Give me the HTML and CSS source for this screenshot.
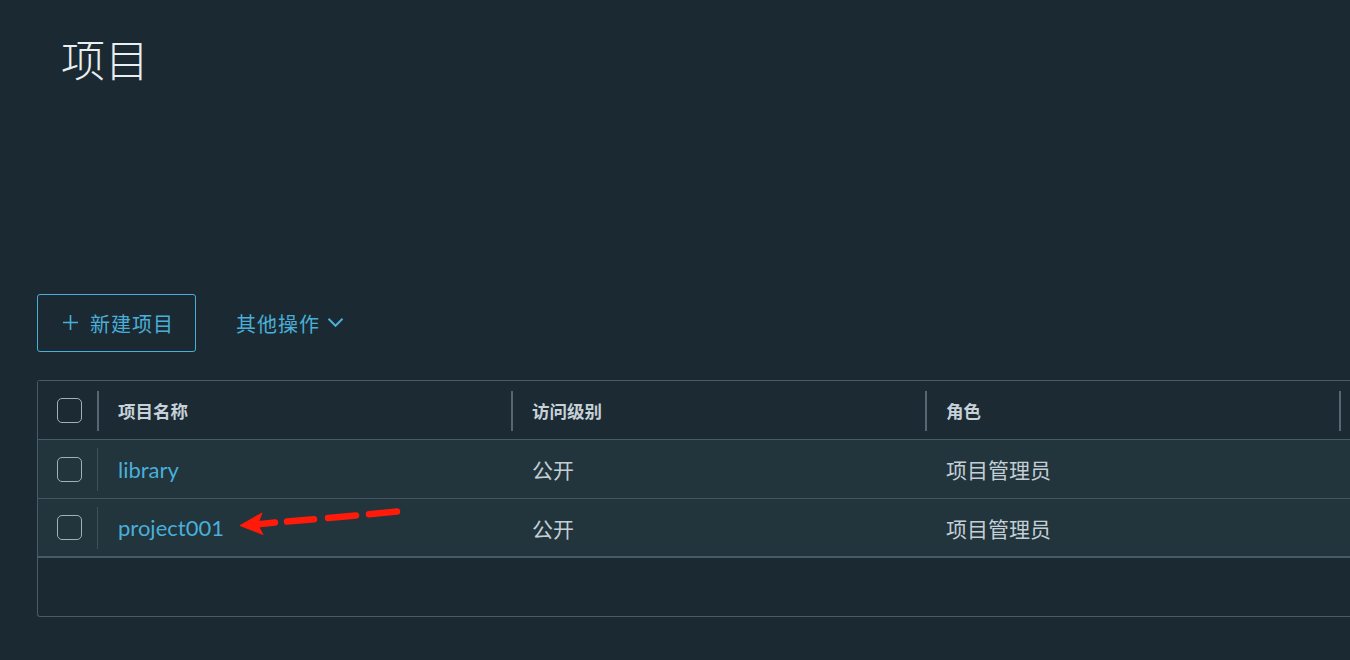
FILE: index.html
```html
<!DOCTYPE html>
<html lang="zh-CN">
<head>
<meta charset="utf-8">
<title>项目</title>
<link rel="stylesheet" href="styles.css">
</head>
<body>
<main class="page">
  <h1 class="title">项目</h1>
  <div class="toolbar">
    <button class="btn-outline" type="button">
      <svg class="plus" width="17" height="17" viewBox="0 0 17 17"><path d="M8.5 1v15M1 8.5h15" stroke="currentColor" stroke-width="1.6" fill="none"/></svg>
      <span>新建项目</span>
    </button>
    <button class="btn-link" type="button">
      <span>其他操作</span>
      <svg class="chev" width="17" height="11" viewBox="0 0 17 11"><path d="M1.5 1.8l7 7 7-7" stroke="currentColor" stroke-width="2" fill="none"/></svg>
    </button>
  </div>
  <div class="grid">
    <div class="row head">
      <div class="cell sel"><span class="cb"></span><span class="sep"></span></div>
      <div class="cell col">项目名称<span class="sep"></span></div>
      <div class="cell col">访问级别<span class="sep"></span></div>
      <div class="cell col">角色<span class="sep"></span></div>
      <div class="cell rest"></div>
    </div>
    <div class="row body">
      <div class="cell sel"><span class="cb"></span><span class="sep light"></span></div>
      <div class="cell col"><a class="link" href="#">library</a></div>
      <div class="cell col">公开</div>
      <div class="cell col">项目管理员</div>
      <div class="cell rest"></div>
    </div>
    <div class="row body last">
      <div class="cell sel"><span class="cb"></span><span class="sep light"></span></div>
      <div class="cell col"><a class="link" href="#">project001</a></div>
      <div class="cell col">公开</div>
      <div class="cell col">项目管理员</div>
      <div class="cell rest"></div>
    </div>
    <div class="footer"></div>
    <svg class="arrow" width="170" height="32" viewBox="0 0 170 32">
      <g stroke="#ff1a0a" stroke-width="6.5" stroke-linecap="round" fill="none">
        <path d="M18 18.4 L37 16.6"/>
        <path d="M49 15.6 L76 13.2"/>
        <path d="M90 11.9 L118 9.4"/>
        <path d="M131 8.2 L159 5.6"/>
      </g>
      <path d="M2 19.5 L24 7 L19.5 18.5 L25 28.5 Z" fill="#ff1a0a" stroke="#ff1a0a" stroke-width="1" stroke-linejoin="round"/>
    </svg>
  </div>
</main>
</body>
</html>
```
FILE: styles.css
```css
html, body {
  margin: 0;
  padding: 0;
  background: #1b2a32;
  overflow: hidden;
}
body {
  width: 1350px;
  height: 660px;
  font-family: "Lato", "Noto Sans CJK SC", sans-serif;
  color: #c4cfd6;
}
.page {
  padding: 31px 0 0 37px;
}
.title {
  margin: 0 0 0 24px;
  font-family: "Noto Sans CJK SC", sans-serif;
  font-weight: 300;
  font-size: 44px;
  line-height: 54px;
  color: #e9eef1;
}
.toolbar {
  display: flex;
  align-items: center;
  margin-top: 209px;
  height: 58px;
}
.btn-outline {
  box-sizing: border-box;
  width: 159px;
  height: 58px;
  display: flex;
  align-items: center;
  gap: 11px;
  padding: 0 0 0 24px;
  border: 1px solid #49afd9;
  border-radius: 3px;
  background: transparent;
  color: #49afd9;
  font-family: "Noto Sans CJK SC", sans-serif;
  font-size: 20px;
  letter-spacing: 1px;
  cursor: pointer;
}
.btn-outline .plus {
  margin-top: -1px;
}
.btn-link {
  display: flex;
  align-items: center;
  gap: 7px;
  margin-left: 40px;
  padding: 0;
  border: 0;
  background: transparent;
  color: #49afd9;
  font-family: "Noto Sans CJK SC", sans-serif;
  font-size: 20px;
  letter-spacing: 1px;
  cursor: pointer;
}
.btn-link .chev {
  margin-top: -2px;
}
.grid {
  position: relative;
  box-sizing: border-box;
  margin-top: 28px;
  width: 1340px;
  border: 1px solid #4a5a66;
  border-right: 0;
  border-radius: 3px 0 0 3px;
}
.row {
  display: flex;
  align-items: stretch;
}
.row.head {
  height: 58px;
  background: #1c2a33;
  border-bottom: 1px solid #4a5b67;
}
.row.body {
  height: 58px;
  background: #22343c;
  border-bottom: 1px solid #435560;
}
.row.body.last {
  height: 57px;
  border-bottom: 2px solid #485a66;
}
.cell {
  position: relative;
  display: flex;
  align-items: center;
  box-sizing: border-box;
}
.sel {
  width: 61px;
  padding-left: 19px;
}
.col {
  width: 414px;
  padding-left: 19px;
  font-family: "Noto Sans CJK SC", sans-serif;
  font-size: 21px;
  color: #c3ced5;
}
.head .col {
  font-weight: 700;
  font-size: 17.5px;
  color: #c6d1d8;
}
.rest {
  flex: 1;
}
.cb {
  box-sizing: border-box;
  width: 25px;
  height: 25px;
  border: 1.5px solid #a3b0b8;
  border-radius: 5px;
}
.sep {
  position: absolute;
  right: 0;
  top: 10px;
  bottom: 8px;
  width: 2px;
  background: #566774;
}
.sep.light {
  right: 1px;
  width: 1px;
  top: 8px;
  bottom: 7px;
  background: #3e505b;
}
.link {
  font-family: "Lato", sans-serif;
  font-size: 22px;
  color: #49afd9;
  text-decoration: none;
}
.footer {
  height: 58px;
}
.arrow {
  position: absolute;
  left: 200px;
  top: 125px;
}
```
